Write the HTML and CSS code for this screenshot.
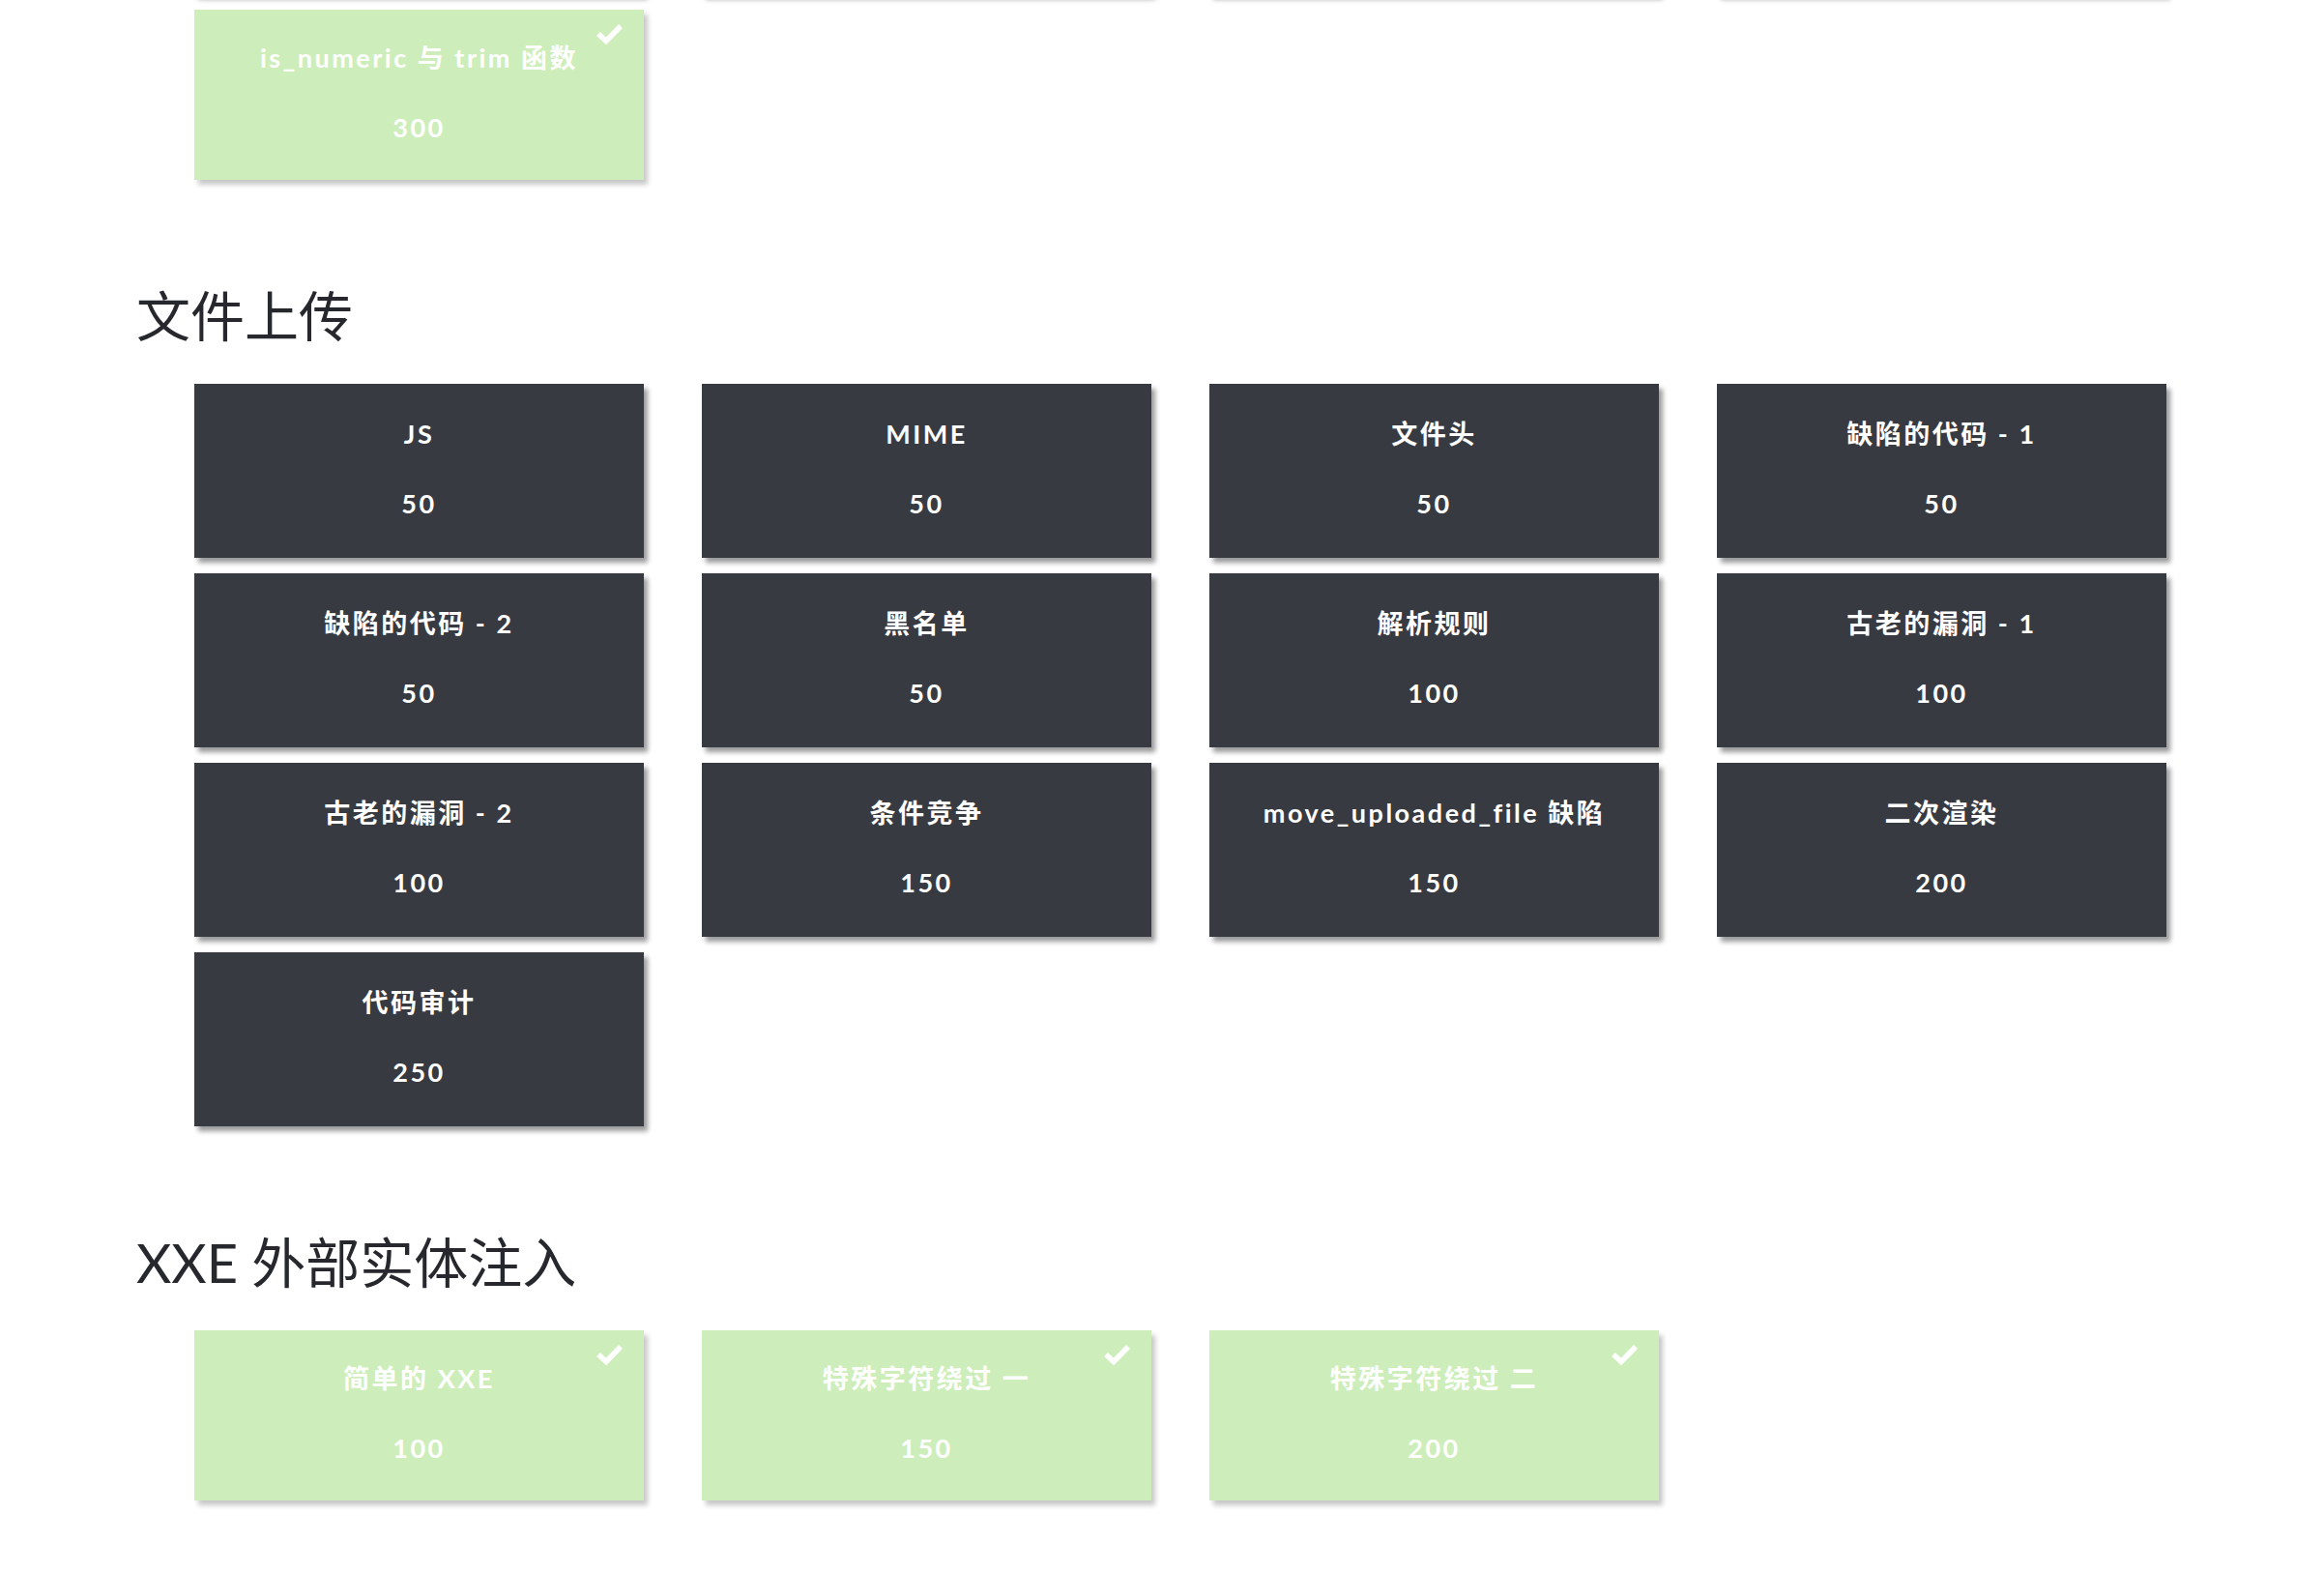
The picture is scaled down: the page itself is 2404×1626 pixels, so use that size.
FILE: index.html
```html
<!DOCTYPE html>
<html lang="zh-CN">
<head>
    <meta charset="UTF-8">
    <meta name="viewport" content="width=device-width, initial-scale=1.0">
    <title>挑战列表</title>
    <link rel="stylesheet" href="styles.css">
</head>
<body>
    <div class="board">
        <!-- 上一个分类，页面已向下滚动，只露出最后一行 -->
        <div class="challenges scrolled">
            <div class="card"></div>
            <div class="card"></div>
            <div class="card"></div>
            <div class="card"></div>
            <div class="card solved">
                <div class="card-title">is_numeric 与 trim 函数</div>
                <div class="card-score">300</div>
                <svg class="check" viewBox="0 0 29 22"><polyline points="3,11 11,18.5 26,3"/></svg>
            </div>
        </div>

        <h2 class="category">文件上传</h2>
        <div class="challenges">
            <div class="card">
                <div class="card-title">JS</div>
                <div class="card-score">50</div>
            </div>
            <div class="card">
                <div class="card-title">MIME</div>
                <div class="card-score">50</div>
            </div>
            <div class="card">
                <div class="card-title">文件头</div>
                <div class="card-score">50</div>
            </div>
            <div class="card">
                <div class="card-title">缺陷的代码 - 1</div>
                <div class="card-score">50</div>
            </div>
            <div class="card">
                <div class="card-title">缺陷的代码 - 2</div>
                <div class="card-score">50</div>
            </div>
            <div class="card">
                <div class="card-title">黑名单</div>
                <div class="card-score">50</div>
            </div>
            <div class="card">
                <div class="card-title">解析规则</div>
                <div class="card-score">100</div>
            </div>
            <div class="card">
                <div class="card-title">古老的漏洞 - 1</div>
                <div class="card-score">100</div>
            </div>
            <div class="card">
                <div class="card-title">古老的漏洞 - 2</div>
                <div class="card-score">100</div>
            </div>
            <div class="card">
                <div class="card-title">条件竞争</div>
                <div class="card-score">150</div>
            </div>
            <div class="card">
                <div class="card-title">move_uploaded_file 缺陷</div>
                <div class="card-score">150</div>
            </div>
            <div class="card">
                <div class="card-title">二次渲染</div>
                <div class="card-score">200</div>
            </div>
            <div class="card">
                <div class="card-title">代码审计</div>
                <div class="card-score">250</div>
            </div>
        </div>

        <h2 class="category">XXE 外部实体注入</h2>
        <div class="challenges">
            <div class="card solved">
                <div class="card-title">简单的 XXE</div>
                <div class="card-score">100</div>
                <svg class="check" viewBox="0 0 29 22"><polyline points="3,11 11,18.5 26,3"/></svg>
            </div>
            <div class="card solved">
                <div class="card-title">特殊字符绕过 一</div>
                <div class="card-score">150</div>
                <svg class="check" viewBox="0 0 29 22"><polyline points="3,11 11,18.5 26,3"/></svg>
            </div>
            <div class="card solved">
                <div class="card-title">特殊字符绕过 二</div>
                <div class="card-score">200</div>
                <svg class="check" viewBox="0 0 29 22"><polyline points="3,11 11,18.5 26,3"/></svg>
            </div>
        </div>
    </div>
</body>
</html>
```

FILE: styles.css
```css
body {
    margin: 0;
    background-color: #fff;
    font-family: Lato, "Noto Sans CJK SC", sans-serif;
    color: #26282d;
}
.board {
    padding: 0 0 80px 141px;
}
.challenges {
    display: grid;
    grid-template-columns: repeat(4, 465px);
    column-gap: 60px;
    row-gap: 16px;
    align-items: start;
    margin-left: 60px;
}
.challenges.scrolled {
    margin-top: -186px; /* scrolled down past the top of the page */
}
.category {
    margin: 107px 0 37px;
    font-size: 56px;
    line-height: 67px;
    font-weight: 400;
}
.card {
    position: relative;
    box-sizing: border-box;
    height: 180px;
    padding-top: 34px;
    background-color: #383a42;
    color: #fff;
    text-align: center;
    font-size: 27px;
    font-weight: bold;
    letter-spacing: 2.5px;
    box-shadow: 4px 5px 5px rgba(0, 0, 0, 0.4);
}
.card-title, .card-score {
    line-height: 36px;
    white-space: nowrap;
}
.card-score {
    margin-top: 36px;
}
.card.solved {
    height: 176px;
    padding-top: 32px;
    background-color: #cdeeba;
    box-shadow: 4px 5px 5px rgba(0, 0, 0, 0.22);
}
.check {
    position: absolute;
    top: 14px;
    right: 21px;
    width: 29px;
    height: 22px;
}
.check polyline {
    fill: none;
    stroke: #fff;
    stroke-width: 5.5;
}
```
